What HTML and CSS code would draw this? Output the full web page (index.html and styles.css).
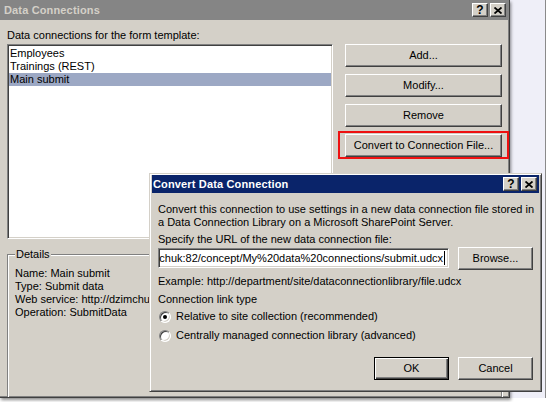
FILE: index.html
```html
<!DOCTYPE html>
<html>
<head>
<meta charset="utf-8">
<link rel="stylesheet" href="styles.css">
</head>
<body>
<div class="screen">
  <div class="win outer">
    <div class="titlebar inactive">
      <span class="title">Data Connections</span>
      <div class="tbtns">
        <span class="tbtn">?</span>
        <span class="tbtn"><svg width="8" height="7" viewBox="0 0 8 7"><path d="M0.5 0.5 L7.5 6.5 M7.5 0.5 L0.5 6.5" stroke="#000" stroke-width="1.8" fill="none"/></svg></span>
      </div>
    </div>
    <div class="outer-body">
      <div class="label">Data connections for the form template:</div>
      <div class="row">
        <div class="listbox">
          <div class="item">Employees</div>
          <div class="item">Trainings (REST)</div>
          <div class="item sel">Main submit</div>
        </div>
        <div class="btncol">
          <div class="btn">Add...</div>
          <div class="btn">Modify...</div>
          <div class="btn">Remove</div>
          <div class="btn marked">Convert to Connection File...</div>
        </div>
      </div>
      <div class="group">
        <div class="legend">Details</div>
        <div class="details">
          <div>Name: Main submit</div>
          <div>Type: Submit data</div>
          <div>Web service: http://dzimchuk:82/concept/_vti_bin/FormsServices.asmx</div>
          <div>Operation: SubmitData</div>
        </div>
      </div>
    </div>
  </div>
  <div class="strip"></div>

  <div class="win dialog">
    <div class="titlebar active">
      <span class="title">Convert Data Connection</span>
      <div class="tbtns">
        <span class="tbtn">?</span>
        <span class="tbtn"><svg width="8" height="7" viewBox="0 0 8 7"><path d="M0.5 0.5 L7.5 6.5 M7.5 0.5 L0.5 6.5" stroke="#000" stroke-width="1.8" fill="none"/></svg></span>
      </div>
    </div>
    <div class="dcontent">
      <div class="para">Convert this connection to use settings in a new data connection file stored in<br>a Data Connection Library on a Microsoft SharePoint Server.</div>
      <div class="specify">Specify the URL of the new data connection file:</div>
      <div class="urlrow">
        <div class="input"><span class="val">http://dzimchuk:82/concept/My%20data%20connections/submit.udcx</span><span class="caret"></span></div>
        <div class="btn browse">Browse...</div>
      </div>
      <div class="example">Example: http://department/site/dataconnectionlibrary/file.udcx</div>
      <div class="linktype">Connection link type</div>
      <div class="radios">
        <div class="radio-row"><span class="radio checked"></span><span>Relative to site collection (recommended)</span></div>
        <div class="radio-row"><span class="radio"></span><span>Centrally managed connection library (advanced)</span></div>
      </div>
      <div class="actions">
        <div class="btn default">OK</div>
        <div class="btn">Cancel</div>
      </div>
    </div>
  </div>
</div>
</body>
</html>
```

FILE: styles.css
```css
* { box-sizing: border-box; }

body {
  margin: 0;
  width: 549px;
  height: 402px;
  overflow: hidden;
  background: #ffffff;
  font: 11px/13px "Liberation Sans", Arial, sans-serif;
  color: #000;
}

.screen {
  position: relative;
  display: flex;
  height: 402px;
}

.outer {
  width: 510px;
  height: 398px;
  flex: none;
  background: #d4d0c8;
  border-right: 1px solid #404040;
  border-bottom: 1px solid #404040;
  box-shadow: inset -1px -1px 0 #808080, 1px 2px 3px rgba(0, 0, 0, 0.45);
  display: flex;
  flex-direction: column;
  overflow: hidden;
  position: relative;
  z-index: 1;
}

.strip {
  width: 36px;
  height: 398px;
  flex: none;
  background: #efeff8;
  border-right: 1px solid #8a8a8a;
}

.titlebar {
  display: flex;
  align-items: center;
  justify-content: space-between;
  font-weight: bold;
  white-space: nowrap;
  flex: none;
}

.titlebar .title { letter-spacing: 0.15px; }

.titlebar.inactive {
  height: 20px;
  background: #858585;
  color: #d4d0c8;
  padding: 0 3px 0 4px;
}

.titlebar.active {
  height: 18px;
  background: #0a246a;
  color: #ffffff;
  padding: 0 2px 0 1px;
}

.tbtns {
  display: flex;
  gap: 2px;
}

.tbtn {
  width: 16px;
  height: 14px;
  background: #d4d0c8;
  border: 1px solid;
  border-color: #ffffff #404040 #404040 #ffffff;
  box-shadow: inset -1px -1px 0 #808080;
  display: flex;
  align-items: center;
  justify-content: center;
  color: #000;
  font-weight: bold;
  font-size: 12px;
  line-height: 12px;
}

.outer-body {
  padding: 9px 7px 0;
  flex: 1;
  display: flex;
  flex-direction: column;
}

.row {
  display: flex;
  margin-top: 2px;
}

.listbox {
  width: 326px;
  height: 195px;
  flex: none;
  background: #ffffff;
  border: 1px solid;
  border-color: #808080 #ffffff #ffffff #808080;
  box-shadow: inset 1px 1px 0 #404040, inset -1px -1px 0 #d4d0c8;
  padding: 2px 1px 0 1px;
}

.item {
  height: 13px;
  padding-left: 1px;
  white-space: nowrap;
}

.item.sel { background: #9ca8c4; }

.btncol {
  margin-left: 12px;
  width: 157px;
  display: flex;
  flex-direction: column;
  gap: 7px;
}

.btn {
  height: 23px;
  background: #d4d0c8;
  border: 1px solid;
  border-color: #ffffff #404040 #404040 #ffffff;
  box-shadow: inset -1px -1px 0 #808080;
  display: flex;
  align-items: center;
  justify-content: center;
  position: relative;
  white-space: nowrap;
}

.btn.marked::after {
  content: "";
  position: absolute;
  left: -8px;
  right: -8px;
  top: -4px;
  bottom: -3px;
  border: 2px solid #ee1111;
}

.group {
  margin-top: 15px;
  width: 495px;
  flex: 1;
  margin-bottom: -20px;
  border: 1px solid #808080;
  box-shadow: inset 1px 1px 0 #ffffff, 1px 1px 0 #ffffff;
}

.legend {
  margin: -7px 0 0 7px;
  padding: 0 1px;
  background: #d4d0c8;
  width: max-content;
}

.details {
  padding: 6px 0 0 7px;
  width: 141px;
  overflow: hidden;
  white-space: nowrap;
}

/* Dialog overlay */
.dialog {
  position: absolute;
  left: 149px;
  top: 173px;
  width: 393px;
  height: 219px;
  z-index: 2;
  background: #d4d0c8;
  border: 1px solid;
  border-color: #d4d0c8 #404040 #404040 #d4d0c8;
  box-shadow: inset 1px 1px 0 #ffffff, inset -1px -1px 0 #808080;
  padding: 1px 2px 2px 2px;
  display: flex;
  flex-direction: column;
}

.dcontent {
  padding: 10px 0 0 6px;
  white-space: nowrap;
}

.specify { margin-top: 4px; }

.urlrow {
  display: flex;
  align-items: flex-start;
  margin-top: 1px;
}

.input {
  width: 291px;
  height: 20px;
  margin-top: 1px;
  margin-right: 9px;
  background: #ffffff;
  border: 1px solid;
  border-color: #808080 #ffffff #ffffff #808080;
  box-shadow: inset 1px 1px 0 #404040, inset -1px -1px 0 #d4d0c8;
  display: flex;
  justify-content: flex-end;
  align-items: center;
  overflow: hidden;
  padding: 0 3px 0 2px;
}

.val { flex: none; }

.caret {
  flex: none;
  width: 1px;
  height: 14px;
  background: #000;
  margin-left: 1px;
}

.browse { width: 75px; }

.example { margin-top: 5px; }

.linktype { margin-top: 5px; }

.radios { margin-top: 1px; }

.radio-row {
  height: 19px;
  display: flex;
  align-items: center;
}

.radio {
  width: 12px;
  height: 12px;
  margin: 0 5px 0 1px;
  border-radius: 50%;
  border: 1px solid;
  border-color: #808080 #ffffff #ffffff #808080;
  background: #ffffff;
  box-shadow: inset 1px 1px 0 #404040, inset -1px -1px 0 #d4d0c8;
  display: flex;
  align-items: center;
  justify-content: center;
}

.radio.checked::after {
  content: "";
  width: 4px;
  height: 4px;
  border-radius: 50%;
  background: #000;
}

.actions {
  display: flex;
  gap: 9px;
  margin-top: 12px;
  padding-left: 216px;
}

.actions .btn { width: 75px; }

.btn.default {
  border: 1px solid #000;
  box-shadow: inset 1px 1px 0 #ffffff, inset -1px -1px 0 #404040, inset -2px -2px 0 #808080;
}
```
